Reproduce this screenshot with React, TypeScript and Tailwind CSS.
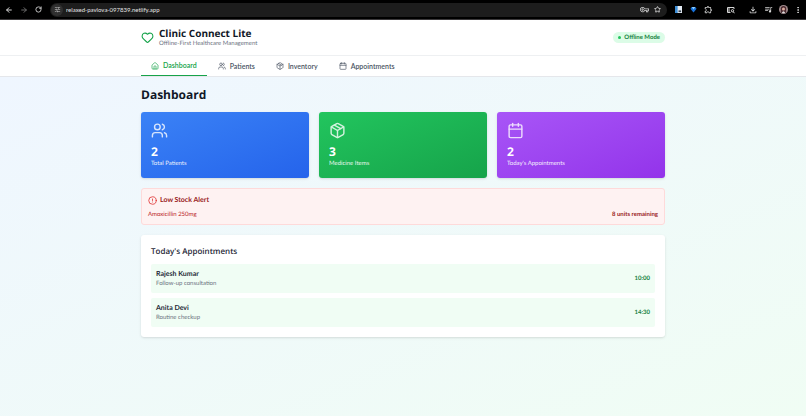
import {
  ArrowLeft,
  ArrowRight,
  Calendar,
  CircleAlert,
  EllipsisVertical,
  Heart,
  House,
  Package,
  RotateCw,
  Star,
  Users,
  type LucideIcon,
} from "lucide-react";
import {
  MdOutlineExtension,
  MdOutlineFileDownload,
  MdOutlineVpnKey,
  MdQueueMusic,
  MdTune,
} from "react-icons/md";

const tabs: { label: string; Icon: LucideIcon; active?: boolean }[] = [
  { label: "Dashboard", Icon: House, active: true },
  { label: "Patients", Icon: Users },
  { label: "Inventory", Icon: Package },
  { label: "Appointments", Icon: Calendar },
];

const stats: { value: number; label: string; Icon: LucideIcon; tone: string }[] = [
  { value: 2, label: "Total Patients", Icon: Users, tone: "from-[#3b82f6] to-[#2563eb]" },
  { value: 3, label: "Medicine Items", Icon: Package, tone: "from-[#22c55e] to-[#16a34a]" },
  { value: 2, label: "Today's Appointments", Icon: Calendar, tone: "from-[#a855f7] to-[#9333ea]" },
];

const appointments = [
  { name: "Rajesh Kumar", reason: "Follow-up consultation", time: "10:00" },
  { name: "Anita Devi", reason: "Routine checkup", time: "14:30" },
];

function BrowserBar() {
  return (
    <div className="flex h-5 items-center border-b border-[#3c3a3c] bg-black pr-1 pl-[5px] text-[#d6d6d6]">
      <button aria-label="Back" className="w-[15px]"><ArrowLeft className="size-2" strokeWidth={3} /></button>
      <button aria-label="Forward" className="w-[15px] text-[#6b6b6b]"><ArrowRight className="size-2" strokeWidth={3} /></button>
      <button aria-label="Reload" className="w-[15px]"><RotateCw className="size-[7px]" strokeWidth={3} /></button>
      <div className="flex h-[14px] flex-1 items-center rounded-full bg-[#1d1d1d] pr-[6px] pl-px">
        <button aria-label="Site settings" className="mr-[3px] flex size-3 items-center justify-center rounded-full bg-[#303030]">
          <MdTune className="size-[7px]" />
        </button>
        <input
          aria-label="Address"
          readOnly
          value="relaxed-pavlova-097839.netlify.app"
          className="min-w-0 flex-1 bg-transparent text-[6px] text-[#e4e4e4] outline-none"
        />
        <button aria-label="Passwords" className="mr-[5px]"><MdOutlineVpnKey className="size-[9px]" /></button>
        <button aria-label="Bookmark"><Star className="size-[7px]" strokeWidth={3} /></button>
      </div>
      <div className="flex items-center pl-2">
        <button aria-label="Reader extension">
          <svg viewBox="0 0 8 8" className="size-[7px]"><path d="M0 0h8v8H0z" fill="#e3ebf3" /><path d="M0 0h3v8H0z" fill="#3d8ed6" /><path d="M4 5h3v2H4z" fill="#3b4652" /></svg>
        </button>
        <button aria-label="Gem extension" className="ml-2">
          <svg viewBox="0 0 8 8" className="size-[7px]"><path d="M2 1h4l1.500 2L4 7.500.5 3z" fill="#1670d8" /><path d="M2 1h4L4 4z" fill="#8fd0ff" /></svg>
        </button>
        <button aria-label="Extensions" className="ml-[7px]"><MdOutlineExtension className="size-[9px]" /></button>
        <button aria-label="Search this page" className="ml-[14px]">
          <svg viewBox="0 0 16 16" className="size-2" fill="none" stroke="currentColor" strokeWidth="2"><path d="M7 13H1V3h13v3" /><circle cx="11" cy="9.500" r="2.300" /><path d="m12.500 11.500 2.500 3" /><path d="M2 4h4v8H2z" fill="currentColor" stroke="none" opacity=".5" /></svg>
        </button>
        <button aria-label="Downloads" className="ml-[13px]"><MdOutlineFileDownload className="size-[10px]" /></button>
        <button aria-label="Media" className="ml-[6px]"><MdQueueMusic className="size-[9px]" /></button>
        <button aria-label="Profile" className="ml-[6px]">
          <svg viewBox="0 0 10 10" className="size-[9px]"><circle cx="5" cy="5" r="5" fill="#a08b8d" /><path d="M2 9V4a3 3 0 0 1 6 0v5z" fill="#4a2a30" /><circle cx="5" cy="4.500" r="1.700" fill="#d9aa9c" /><path d="M3 9q2-4 4 0z" fill="#ddd" /></svg>
        </button>
        <button aria-label="Menu" className="ml-[6px]"><EllipsisVertical className="size-2" strokeWidth={3} /></button>
      </div>
    </div>
  );
}

export default function App() {
  return (
    <div className="flex min-h-screen flex-col bg-white font-[Lato,'Open_Sans',sans-serif] text-[#1f2937] [text-rendering:geometricPrecision]">
      <BrowserBar />
      <header className="border-b border-[#eef0f2] px-[7px]">
        <div className="mx-auto flex h-[35px] max-w-[524px] items-center justify-between">
          <div className="flex items-center gap-[5px]">
            <Heart className="size-[13px] text-[#16a34a]" />
            <div>
              <h1 className="font-['Open_Sans',sans-serif] text-[10px] leading-[12px] font-bold text-[#111827]">Clinic Connect Lite</h1>
              <p className="text-[6px] leading-[9px] text-[#6b7280]">Offline-First Healthcare Management</p>
            </div>
          </div>
          <div className="flex h-[11px] items-center gap-[3px] rounded-full bg-[#dcfce7] px-[5px] text-[6px] font-bold text-[#15803d]">
            <span className="size-[3px] rounded-full bg-[#22c55e]" />
            Offline Mode
          </div>
        </div>
      </header>
      <nav className="border-b border-[#e5e7eb] px-[7px]">
        <div className="mx-auto flex max-w-[524px] gap-px">
          {tabs.map(({ label, Icon, active }) => (
            <button
              key={label}
              className={
                active
                  ? "flex h-5 items-center gap-1 border-b border-[#16a34a] px-[10px] text-[7px] font-semibold text-[#16a34a]"
                  : "flex h-5 items-center gap-1 px-[10px] text-[7px] font-semibold text-[#4b5563]"
              }
            >
              <Icon className="size-2" />
              {label}
            </button>
          ))}
        </div>
      </nav>
      <main className="flex-1 bg-linear-to-br from-[#eff6ff] to-[#f0fdf4] px-[7px] py-[10px]">
        <div className="mx-auto flex max-w-[524px] flex-col gap-[10px]">
          <h2 className="font-['Open_Sans',sans-serif] text-[12px] leading-[15px] font-bold text-[#111827]">Dashboard</h2>
          <div className="grid grid-cols-3 gap-[10px]">
            {stats.map(({ value, label, Icon, tone }) => (
              <section key={label} className={`h-[66px] rounded-[3px] bg-linear-to-br p-[10px] text-white shadow-sm ${tone}`}>
                <Icon className="size-[17px] opacity-80" />
                <p className="mt-[6px] font-['Open_Sans',sans-serif] text-[12px] leading-[14px] font-bold">{value}</p>
                <p className="text-[6px] leading-[9px] opacity-90">{label}</p>
              </section>
            ))}
          </div>
          <section className="rounded-[3px] border border-[#fedada] bg-[#fef2f2] px-[6px] pt-[6px] pb-[5px]">
            <h3 className="flex items-center gap-[3px] text-[7px] leading-[11px] font-bold text-[#991b1b]">
              <CircleAlert className="size-[9px] text-[#dc2626]" />
              Low Stock Alert
            </h3>
            <div className="mt-1 flex justify-between text-[6px] leading-[9px]">
              <span className="text-[#b91c1c]">Amoxicillin 250mg</span>
              <span className="font-bold text-[#991b1b]">8 units remaining</span>
            </div>
          </section>
          <section className="rounded-[3px] bg-white p-[10px] shadow-sm">
            <h3 className="font-['Open_Sans',sans-serif] text-[8px] leading-[13px] font-semibold">Today's Appointments</h3>
            <ul className="mt-[6px] flex flex-col gap-[5px]">
              {appointments.map(({ name, reason, time }) => (
                <li key={name} className="flex items-center justify-between rounded-[2px] bg-[#f0fdf4] p-[5px]">
                  <div>
                    <p className="text-[7px] leading-[10px] font-bold">{name}</p>
                    <p className="text-[6px] leading-[9px] text-[#6b7280]">{reason}</p>
                  </div>
                  <time className="text-[6px] font-bold text-[#15803d]">{time}</time>
                </li>
              ))}
            </ul>
          </section>
        </div>
      </main>
    </div>
  );
}
